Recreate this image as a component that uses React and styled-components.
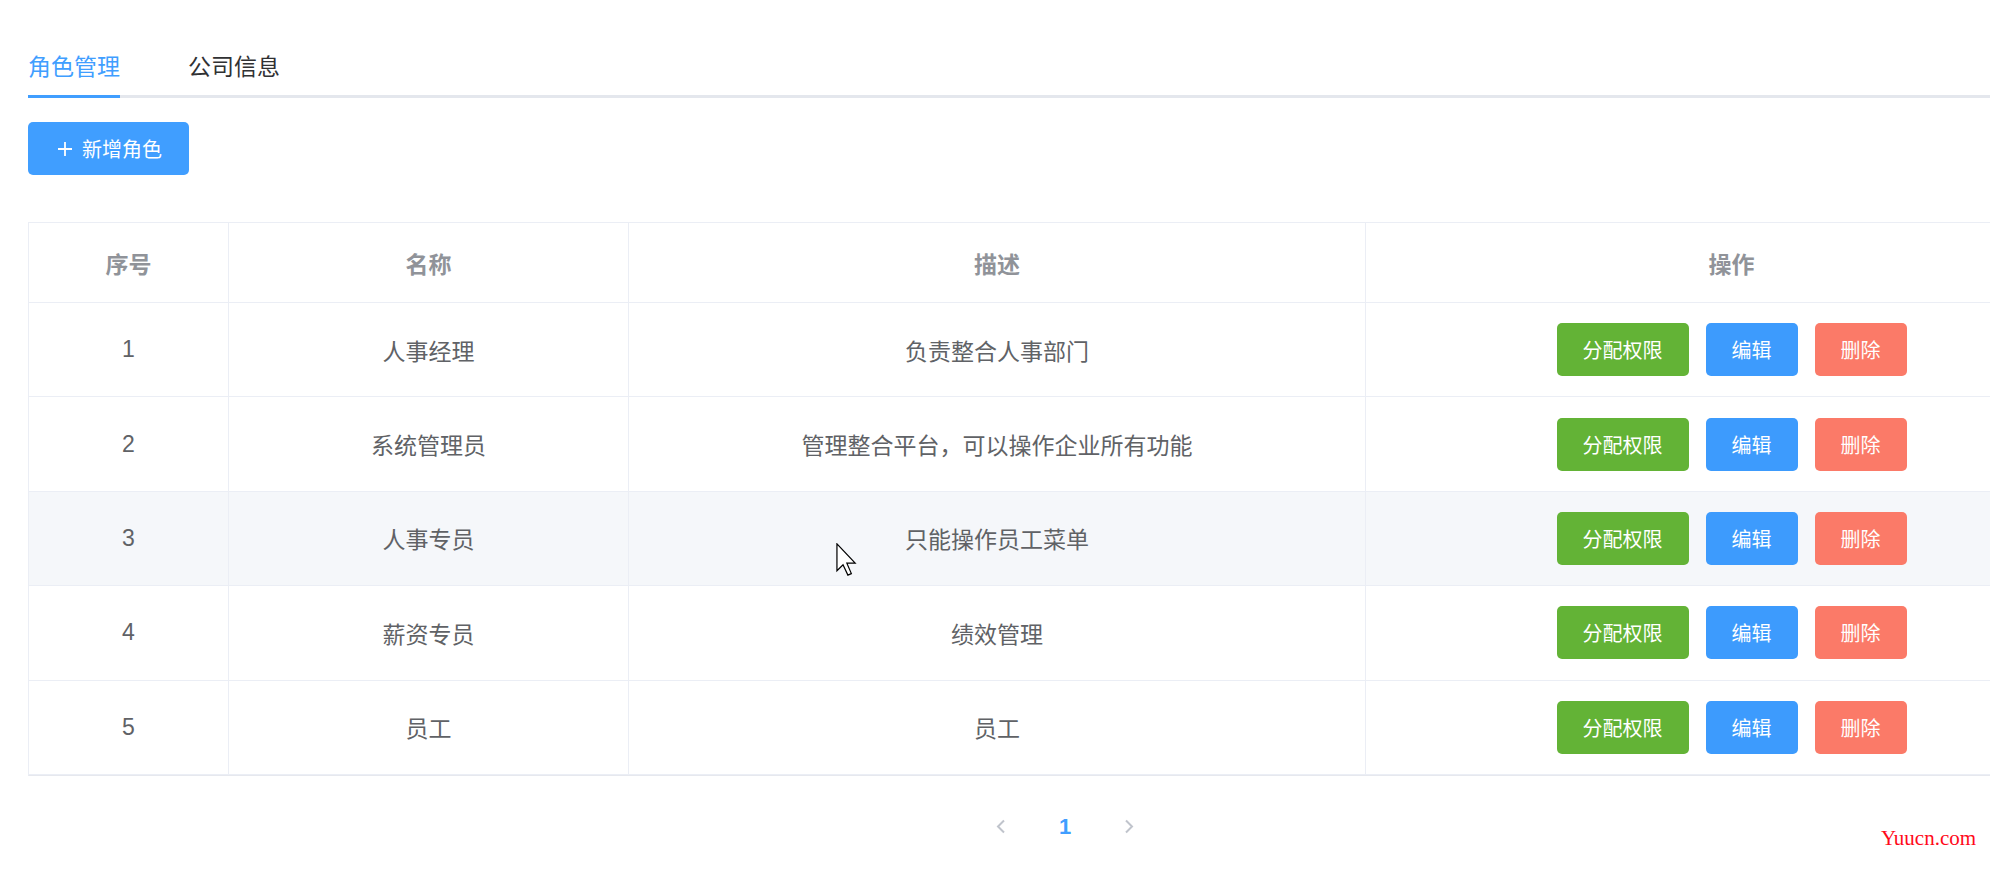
import React from 'react';
import styled, { createGlobalStyle } from 'styled-components';

const GlobalStyle = createGlobalStyle`
  html, body { margin: 0; padding: 0; background: #fff; overflow: hidden; }
  body { font-family: "Liberation Sans", "Noto Sans CJK SC", sans-serif; }
  * { box-sizing: border-box; }
`;

const Page = styled.div`
  position: relative;
  width: 1990px;
  height: 895px;
  overflow: hidden;
  background: #fff;
`;

const Content = styled.div`
  width: 2098px;
  padding: 32px 0 0 28px;
  display: flex;
  flex-direction: column;
  align-items: flex-start;
`;

const TabNav = styled.div`
  position: relative;
  display: flex;
  width: 100%;
  &::after {
    content: '';
    position: absolute;
    left: 0;
    right: 0;
    bottom: 0;
    height: 3px;
    background: #e4e7ed;
  }
`;

const TabItem = styled.div`
  position: relative;
  z-index: 1;
  display: flex;
  padding-left: ${p => (p.$first ? '0' : '35px')};
  padding-right: 33px;
  cursor: pointer;
`;

const TabLabel = styled.span`
  display: flex;
  align-items: center;
  height: 66px;
  padding-top: 3px;
  border-bottom: 3px solid ${p => (p.$active ? '#409eff' : 'transparent')};
  font-size: 23px;
  color: ${p => (p.$active ? '#409eff' : '#303133')};
`;

const PrimaryButton = styled.button`
  margin-top: 24px;
  height: 53px;
  padding: 0 27px 0 29px;
  display: inline-flex;
  align-items: center;
  gap: 9px;
  border: none;
  border-radius: 5px;
  background: #409eff;
  color: #fff;
  font-family: inherit;
  font-size: 20px;
  cursor: pointer;
`;

const Table = styled.div`
  margin-top: 47px;
  width: 2070px;
  border-top: 1px solid #ebeef5;
  border-left: 1px solid #ebeef5;
  border-bottom: 1px solid #e6e8ee;
`;

const Row = styled.div`
  display: grid;
  grid-template-columns: 200px 400px 737px 732px;
  height: ${p => (p.$head ? '80px' : '94.4px')};
  background: ${p => (p.$hover ? '#f5f7fa' : '#fff')};
`;

const Cell = styled.div`
  display: flex;
  align-items: center;
  justify-content: center;
  border-right: 1px solid #ebeef5;
  border-bottom: 1px solid #ebeef5;
  font-size: 23px;
  color: ${p => (p.$head ? '#909399' : '#606266')};
  font-weight: ${p => (p.$head ? 700 : 400)};
  white-space: nowrap;
`;

const ActionGroup = styled.div`
  display: flex;
  gap: 17px;
`;

const variants = {
  success: '#63b336',
  primary: '#3d9bfd',
  danger: '#fb7a68',
};

const ActionButton = styled.button`
  height: 53px;
  padding: 0 26px;
  border: none;
  border-radius: 5px;
  background: ${p => variants[p.$variant]};
  color: #fff;
  font-family: inherit;
  font-size: 20px;
  cursor: pointer;
`;

const Pagination = styled.div`
  margin-top: 28px;
  width: 2070px;
  padding-left: 4px;
  display: flex;
  justify-content: center;
`;

const PageItem = styled.div`
  width: 64px;
  height: 46px;
  display: flex;
  align-items: center;
  justify-content: center;
  font-size: 22px;
  font-weight: 700;
  color: ${p => (p.$active ? '#409eff' : '#c0c4cc')};
`;

const Cursor = styled.svg`
  position: absolute;
  left: 836px;
  top: 543px;
  pointer-events: none;
`;

const Watermark = styled.div`
  position: absolute;
  left: 1881px;
  top: 828px;
  font-family: "Liberation Serif", serif;
  font-size: 21px;
  line-height: 1;
  color: #ff0a1a;
`;

const rows = [
  { id: 1, name: '人事经理', desc: '负责整合人事部门' },
  { id: 2, name: '系统管理员', desc: '管理整合平台，可以操作企业所有功能' },
  { id: 3, name: '人事专员', desc: '只能操作员工菜单', hover: true },
  { id: 4, name: '薪资专员', desc: '绩效管理' },
  { id: 5, name: '员工', desc: '员工' },
];

const PlusIcon = () => (
  <svg width="16" height="16" viewBox="0 0 16 16">
    <path d="M8 1v14M1 8h14" stroke="#fff" strokeWidth="1.8" fill="none" />
  </svg>
);

const Chevron = ({ dir }) => (
  <svg width="10" height="15" viewBox="0 0 10 15">
    <polyline
      points={dir === 'left' ? '8,1.5 2,7.5 8,13.5' : '2,1.5 8,7.5 2,13.5'}
      stroke="#c0c4cc"
      strokeWidth="2"
      fill="none"
    />
  </svg>
);

export default function App() {
  return (
    <Page>
      <GlobalStyle />
      <Content>
        <TabNav>
          <TabItem $first>
            <TabLabel $active>角色管理</TabLabel>
          </TabItem>
          <TabItem>
            <TabLabel>公司信息</TabLabel>
          </TabItem>
        </TabNav>

        <PrimaryButton>
          <PlusIcon />
          新增角色
        </PrimaryButton>

        <Table>
          <Row $head>
            <Cell $head>序号</Cell>
            <Cell $head>名称</Cell>
            <Cell $head>描述</Cell>
            <Cell $head>操作</Cell>
          </Row>
          {rows.map(r => (
            <Row key={r.id} $hover={r.hover}>
              <Cell>{r.id}</Cell>
              <Cell>{r.name}</Cell>
              <Cell>{r.desc}</Cell>
              <Cell>
                <ActionGroup>
                  <ActionButton $variant="success">分配权限</ActionButton>
                  <ActionButton $variant="primary">编辑</ActionButton>
                  <ActionButton $variant="danger">删除</ActionButton>
                </ActionGroup>
              </Cell>
            </Row>
          ))}
        </Table>

        <Pagination>
          <PageItem>
            <Chevron dir="left" />
          </PageItem>
          <PageItem $active>1</PageItem>
          <PageItem>
            <Chevron dir="right" />
          </PageItem>
        </Pagination>
      </Content>

      <Cursor width="21" height="33" viewBox="0 0 12 19">
        <path
          d="M0.5 0.5 L0.5 16 L4 12.5 L6.8 18.5 L8.8 17.6 L6.2 11.6 L11 11.6 Z"
          fill="#fff"
          stroke="#000"
          strokeWidth="0.7"
          strokeLinejoin="miter"
        />
      </Cursor>
      <Watermark>Yuucn.com</Watermark>
    </Page>
  );
}
